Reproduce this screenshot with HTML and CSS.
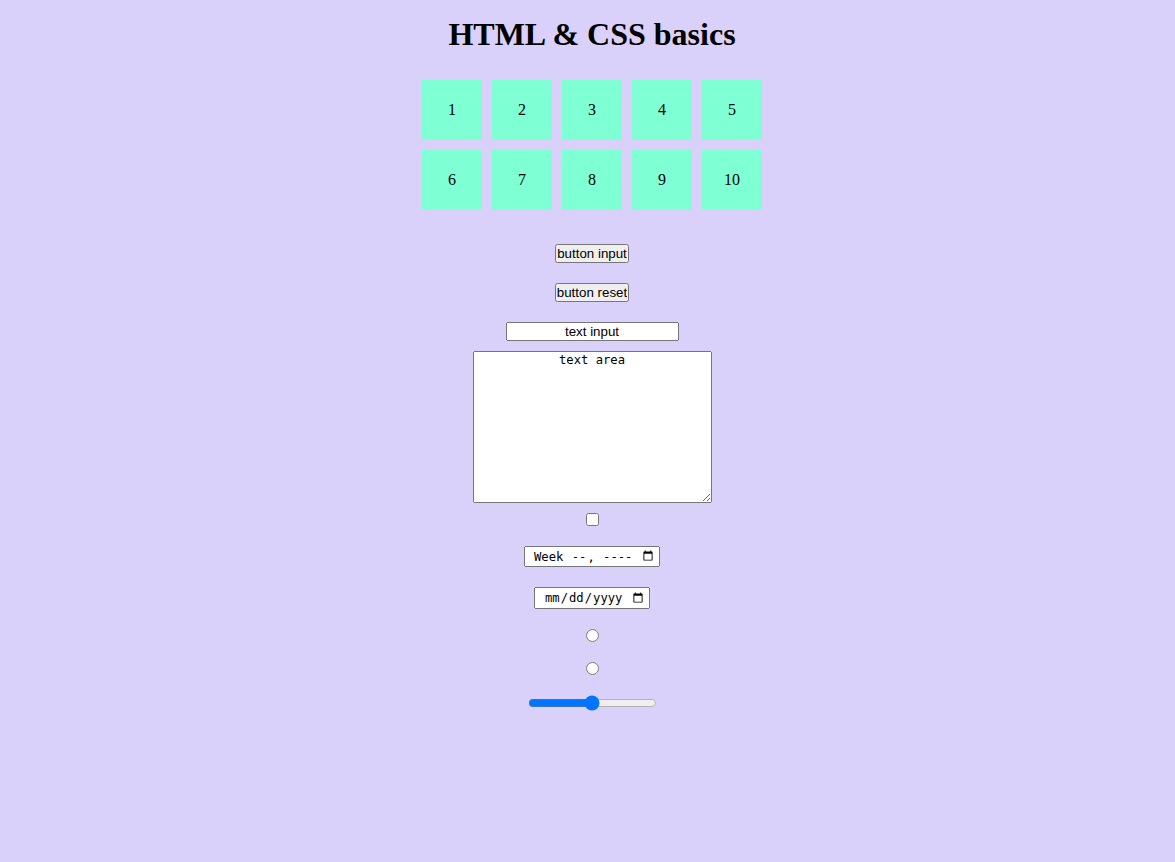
FILE: index.html
```html
<!DOCTYPE html>
<html lang="en">
<head>
<meta charset="utf-8">
<title>HTML &amp; CSS basics</title>
<link rel="stylesheet" href="styles.css">
</head>
<body>
<h1 class="title">HTML &amp; CSS basics</h1>
<div class="grid">
  <div class="cell">1</div>
  <div class="cell">2</div>
  <div class="cell">3</div>
  <div class="cell">4</div>
  <div class="cell">5</div>
  <div class="cell">6</div>
  <div class="cell">7</div>
  <div class="cell">8</div>
  <div class="cell">9</div>
  <div class="cell">10</div>
</div>
<form class="controls">
  <input class="btn" type="button" value="button input">
  <input class="btn" type="reset" value="button reset">
  <div class="group">
    <input class="text" type="text" value="text input">
    <textarea class="area">text area</textarea>
    <input class="check" type="checkbox">
  </div>
  <input class="week" type="week">
  <input class="date" type="date">
  <input class="radio" type="radio" name="r">
  <input class="radio" type="radio" name="r">
  <input class="range" type="range">
</form>
</body>
</html>
```
FILE: styles.css
```css
* {
  margin: 0;
  padding: 0;
}

body {
  background: #d9d1fa;
  padding-left: 9px;
  font-family: "Liberation Serif", "Times New Roman", serif;
}

.title {
  text-align: center;
  font-size: 32px;
  font-weight: bold;
  margin: 16px 0 27px;
}

.grid {
  display: grid;
  grid-template-columns: repeat(5, 60px);
  gap: 10px;
  justify-content: center;
}

.cell {
  height: 60px;
  background: #7fffd4;
  display: flex;
  align-items: center;
  justify-content: center;
  font-size: 16px;
}

.controls {
  display: flex;
  flex-direction: column;
  align-items: center;
  gap: 20px;
  margin-top: 34px;
}

.group {
  display: flex;
  flex-direction: column;
  align-items: center;
  gap: 10px;
}

.btn {
  font-family: "Liberation Sans", Arial, sans-serif;
  font-size: 13.333px;
  padding: 0;
}

.text {
  width: 173px;
  height: 19px;
  box-sizing: border-box;
  text-align: center;
  font-family: "Liberation Sans", Arial, sans-serif;
  font-size: 13.333px;
}

.area {
  width: 239px;
  height: 152px;
  box-sizing: border-box;
  text-align: center;
  font-family: "DejaVu Sans Mono", monospace;
  font-size: 12.2px;
  padding-top: 1px;
}

.check {
  width: 13px;
  height: 13px;
}

.week {
  width: 136px;
  height: 21px;
  box-sizing: border-box;
  font-family: "DejaVu Sans Mono", monospace;
  font-size: 12.2px;
  padding: 0 2px 0 8px;
}

.date {
  width: 116px;
  height: 22px;
  box-sizing: border-box;
  font-family: "DejaVu Sans Mono", monospace;
  font-size: 12.2px;
  padding: 0 2px 0 8px;
}

.radio {
  width: 13px;
  height: 13px;
}

.range {
  width: 129px;
  height: 16px;
}
```
